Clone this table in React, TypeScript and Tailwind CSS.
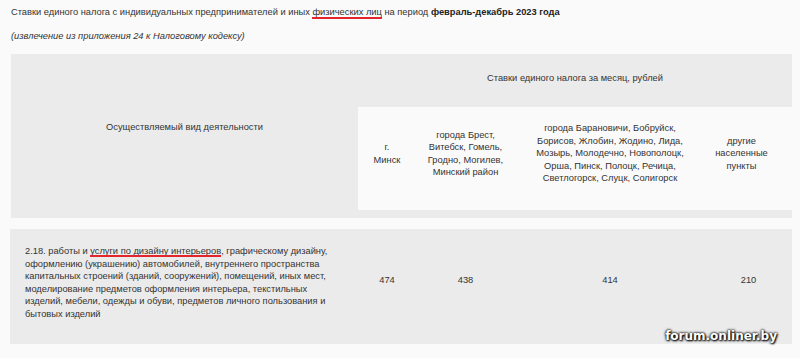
function Mark({ children, low }: { children: React.ReactNode; low?: boolean }) {
  return (
    <span className="relative inline-block">
      {children}
      <span
        className={`absolute left-0 right-0 h-[1.5px] bg-[#e3262b] ${low ? "bottom-[0px]" : "bottom-[1px]"}`}
      />
    </span>
  )
}

export default function App() {
  const heads = [
    { w: "w-[58px]", lines: ["г.", "Минск"], cls: "" },
    { w: "w-[99px]", lines: ["города Брест,", "Витебск, Гомель,", "Гродно, Могилев,", "Минский район"], cls: "" },
    {
      w: "w-[190px]",
      lines: [
        "города Барановичи, Бобруйск,",
        "Борисов, Жлобин, Жодино, Лида,",
        "Мозырь, Молодечно, Новополоцк,",
        "Орша, Пинск, Полоцк, Речица,",
        "Светлогорск, Слуцк, Солигорск",
      ],
      cls: "",
    },
    { w: "w-[87px]", lines: ["другие", "населенные", "пункты"], cls: "pr-[14px]" },
  ]
  const values = [
    { w: "w-[58px]", v: "474" },
    { w: "w-[99px]", v: "438" },
    { w: "w-[190px]", v: "414" },
    { w: "w-[87px]", v: "210" },
  ]

  return (
    <div className="w-[800px] h-[358px] bg-[#fafafa] text-[#333] text-[9.3px] leading-[12.5px] font-['Liberation_Sans',Arial,sans-serif] overflow-hidden">
      <p className="pl-[11px] pt-[6px] h-[30px]">
        Ставки единого налога с индивидуальных предпринимателей и иных <Mark low>физических лиц</Mark> на период{" "}
        <b className="text-[#222]">февраль-декабрь 2023 года</b>
      </p>
      <p className="pl-[11px] italic h-[24px]">(извлечение из приложения 24 к Налоговому кодексу)</p>

      {/* шапка таблицы */}
      <div className="ml-[11px] mr-[8px] h-[164px] bg-[#ebebeb] flex">
        <div className="w-[347px] flex items-center justify-center pb-[18px]">Осуществляемый вид деятельности</div>
        <div className="flex-1 flex flex-col">
          <div className="h-[53px] flex items-center justify-center pb-[4px]">
            Ставки единого налога за месяц, рублей
          </div>
          <div className="h-[103px] bg-[#fafafa] flex pb-[10px]">
            {heads.map((h, i) => (
              <div key={i} className={`${h.w} ${h.cls} flex items-center justify-center text-center`}>
                <div>
                  {h.lines.map((l, j) => (
                    <div key={j}>{l}</div>
                  ))}
                </div>
              </div>
            ))}
          </div>
        </div>
      </div>

      {/* строка 2.18 */}
      <div className="relative ml-[10px] mr-[8px] mt-[11px] h-[115px] bg-[#ebebeb] flex">
        <div className="w-[348px] pl-[15px] flex items-center pb-[8px]">
          <div>
            <div>
              2.18. работы и <Mark>услуги по дизайну интерьеров</Mark>, графическому дизайну,
            </div>
            <div>оформлению (украшению) автомобилей, внутреннего пространства</div>
            <div>капитальных строений (зданий, сооружений), помещений, иных мест,</div>
            <div>моделирование предметов оформления интерьера, текстильных</div>
            <div>изделий, мебели, одежды и обуви, предметов личного пользования и</div>
            <div>бытовых изделий</div>
          </div>
        </div>
        {values.map((c, i) => (
          <div key={i} className={`${c.w} flex items-center justify-center pb-[12px]`}>
            {c.v}
          </div>
        ))}
        <div className="absolute right-[15px] bottom-[2px] text-white font-bold text-[12px] font-['DejaVu_Sans',Verdana,sans-serif] [text-shadow:0_0_2px_#000,0_0_3px_#000,1px_1px_2px_#000]">
          forum.onliner.by
        </div>
      </div>
    </div>
  )
}
